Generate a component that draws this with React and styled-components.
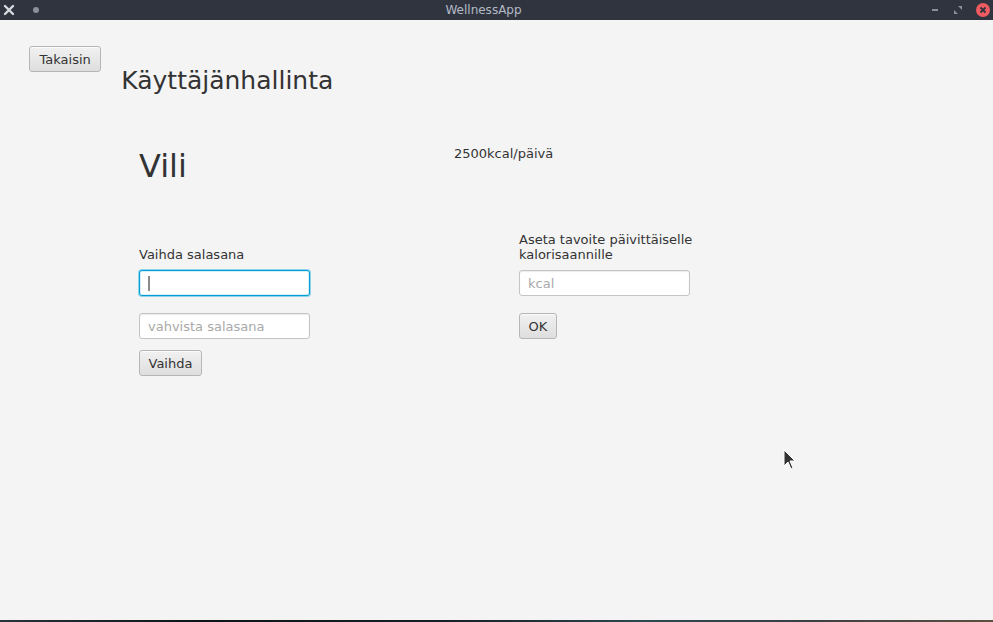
import React from "react";
import styled, { createGlobalStyle } from "styled-components";

const GlobalStyle = createGlobalStyle`
  html, body {
    margin: 0;
    padding: 0;
    background: #f4f4f4;
    overflow: hidden;
  }
  * {
    box-sizing: border-box;
  }
`;

const Window = styled.div`
  position: relative;
  width: 993px;
  height: 622px;
  display: flex;
  flex-direction: column;
  font-family: "DejaVu Sans", "Liberation Sans", sans-serif;
  color: #333;
  overflow: hidden;
`;

const TitleBar = styled.div`
  height: 20px;
  flex: none;
  background: #2f343f;
  display: flex;
  align-items: center;
  justify-content: space-between;
  padding: 0 3px;
`;

const TitleLeft = styled.div`
  display: flex;
  align-items: center;
  gap: 18px;
  width: 100px;
`;

const TitleRight = styled.div`
  display: flex;
  align-items: center;
  justify-content: flex-end;
  gap: 13px;
  width: 126px;
`;

const WindowTitle = styled.div`
  font-size: 12px;
  color: #b4bac6;
`;

const Dot = styled.span`
  width: 6px;
  height: 6px;
  border-radius: 50%;
  background: #8a8f9c;
`;

const CloseCircle = styled.span`
  width: 14px;
  height: 14px;
  border-radius: 50%;
  background: #f05a61;
  display: flex;
  align-items: center;
  justify-content: center;
`;

const Content = styled.div`
  flex: 1;
  background: #f4f4f4;
  padding: 26px 0 0 29px;
`;

const Header = styled.div`
  display: flex;
  align-items: flex-start;
`;

const Button = styled.button`
  font-family: "DejaVu Sans", "Liberation Sans", sans-serif;
  font-size: 13px;
  color: #333;
  height: 26px;
  padding: 0 ${(p) => (p.$wide ? 9.5 : 8.5)}px;
  border: 1px solid #b6b6b6;
  border-radius: 3px;
  background: linear-gradient(#f1f1f1, #dedede);
  box-shadow: inset 0 1px 0 #fafafa;
  cursor: default;
`;

const PageTitle = styled.h1`
  margin: 21px 0 0 20px;
  font-size: 25px;
  font-weight: normal;
  line-height: 28px;
  color: #333;
`;

const Profile = styled.div`
  padding-left: 110px;
  margin-top: 52px;
`;

const NameRow = styled.div`
  display: flex;
  align-items: flex-start;
`;

const Name = styled.div`
  width: 315px;
  font-size: 32px;
  line-height: 38px;
`;

const Goal = styled.div`
  font-size: 13px;
  line-height: 16px;
  margin-top: -1px;
`;

const Forms = styled.div`
  display: grid;
  grid-template-columns: 380px 180px;
  margin-top: 45px;
`;

const Column = styled.div`
  display: flex;
  flex-direction: column;
  align-items: flex-start;
`;

const Label = styled.div`
  height: 35px;
  display: flex;
  align-items: flex-end;
  font-size: 13px;
  line-height: 15px;
  padding-bottom: 3px;
`;

const Input = styled.input`
  width: 171px;
  height: 26px;
  margin-top: 5px;
  padding: 0 8px;
  font-family: "DejaVu Sans", "Liberation Sans", sans-serif;
  font-size: 13px;
  color: #333;
  background: #fff;
  border: 1px solid ${(p) => (p.$focused ? "#039ed3" : "#c4c4c4")};
  border-radius: 3px;
  box-shadow: ${(p) =>
    p.$focused
      ? "0 0 0 1px #8fd3ec, inset 0 0 0 1px #d6f0fa"
      : "inset 0 1px 1px #ececec"};
  outline: none;
  &::placeholder {
    color: #a9a9a9;
  }
`;

const Caret = styled.span`
  position: absolute;
  left: 9px;
  top: 6px;
  width: 2px;
  height: 15px;
  background: #8a8a8a;
`;

const FieldWrap = styled.div`
  position: relative;
  margin-top: 5px;
  & > input {
    margin-top: 0;
  }
`;

const Spaced = styled.div`
  margin-top: ${(p) => p.$gap}px;
  & > input {
    margin-top: 0;
  }
`;

const Cursor = styled.svg`
  position: absolute;
  left: 783px;
  top: 449px;
`;

const BottomStrip = styled.div`
  height: 2px;
  flex: none;
  background: linear-gradient(90deg, #2a3338, #101418 20%, #1a1f25 45%, #2c4850 65%, #3a3f44 80%, #5a5040);
`;

export default function App() {
  return (
    <Window>
      <GlobalStyle />
      <TitleBar>
        <TitleLeft>
          <svg width="12" height="12" viewBox="0 0 12 12">
            <path d="M2 2 L10 10 M10 2 L2 10" stroke="#d8dbe0" strokeWidth="2.4" strokeLinecap="round" />
          </svg>
          <Dot />
        </TitleLeft>
        <WindowTitle>WellnessApp</WindowTitle>
        <TitleRight>
          <svg width="10" height="10" viewBox="0 0 10 10">
            <rect x="2" y="4" width="6" height="2" fill="#8a8f9c" />
          </svg>
          <svg width="10" height="10" viewBox="0 0 10 10">
            <path d="M5 1 H9 V5 Z M1 5 V9 H5 Z" fill="#8a8f9c" />
          </svg>
          <CloseCircle>
            <svg width="8" height="8" viewBox="0 0 8 8">
              <path d="M1.5 1.5 L6.5 6.5 M6.5 1.5 L1.5 6.5" stroke="#2f343f" strokeWidth="1.8" />
            </svg>
          </CloseCircle>
        </TitleRight>
      </TitleBar>
      <Content>
        <Header>
          <Button $wide>Takaisin</Button>
          <PageTitle>Käyttäjänhallinta</PageTitle>
        </Header>
        <Profile>
          <NameRow>
            <Name>Vili</Name>
            <Goal>2500kcal/päivä</Goal>
          </NameRow>
          <Forms>
            <Column>
              <Label>Vaihda salasana</Label>
              <FieldWrap>
                <Input type="password" $focused />
                <Caret />
              </FieldWrap>
              <Spaced $gap={17}>
                <Input type="password" placeholder="vahvista salasana" />
              </Spaced>
              <Spaced $gap={11}>
                <Button>Vaihda</Button>
              </Spaced>
            </Column>
            <Column>
              <Label>
                Aseta tavoite päivittäiselle
                <br />
                kalorisaannille
              </Label>
              <Input placeholder="kcal" />
              <Spaced $gap={17}>
                <Button>OK</Button>
              </Spaced>
            </Column>
          </Forms>
        </Profile>
      </Content>
      <BottomStrip />
      <Cursor width="14" height="22" viewBox="0 0 14 22">
        <path d="M1 1 L1 17 L5 13 L8 20 L10 19 L7 12 L12 12 Z" fill="#333" stroke="#fff" strokeWidth="1" />
      </Cursor>
    </Window>
  );
}
